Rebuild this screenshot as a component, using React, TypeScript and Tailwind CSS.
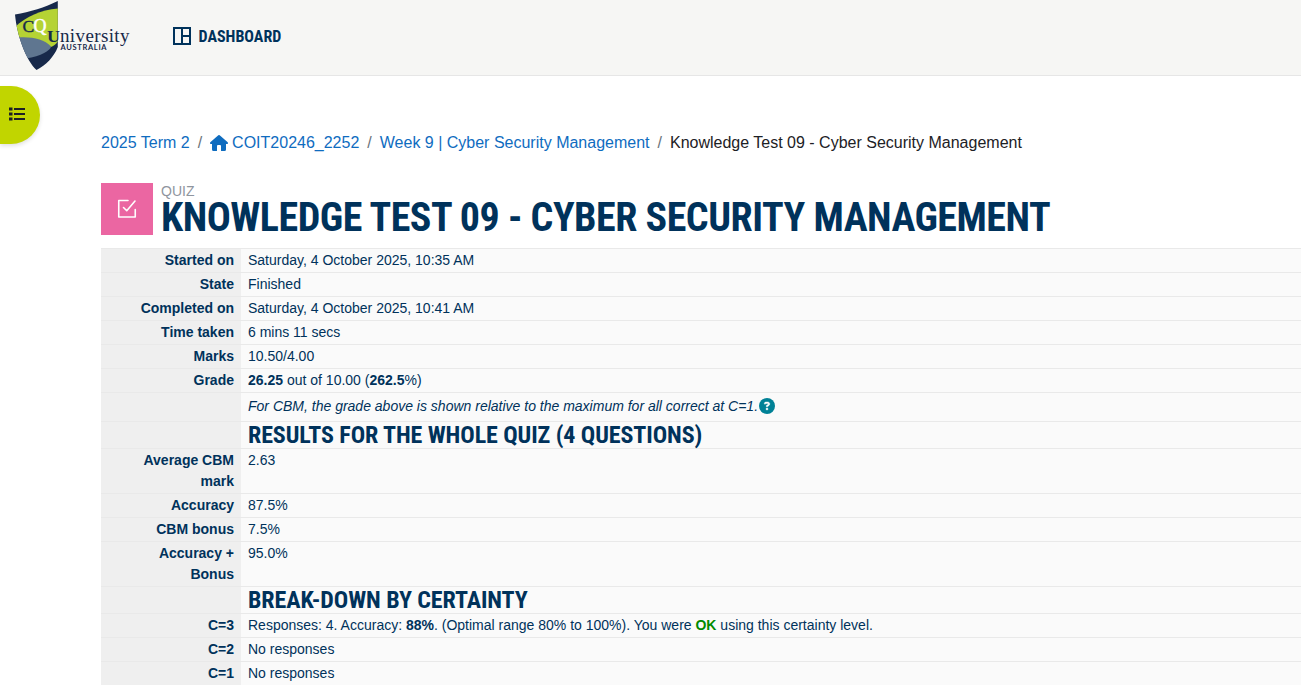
import type { ReactNode } from 'react';

const heading = "font-['Roboto_Condensed',Roboto,sans-serif] [font-stretch:75%] font-bold uppercase text-[#00325b] whitespace-nowrap";

const rows: { label: string; value: ReactNode; h: string; title?: boolean }[] = [
  { label: 'Started on', value: 'Saturday, 4 October 2025, 10:35 AM', h: 'h-[24px]' },
  { label: 'State', value: 'Finished', h: 'h-[24px]' },
  { label: 'Completed on', value: 'Saturday, 4 October 2025, 10:41 AM', h: 'h-[24px]' },
  { label: 'Time taken', value: '6 mins 11 secs', h: 'h-[24px]' },
  { label: 'Marks', value: '10.50/4.00', h: 'h-[24px]' },
  { label: 'Grade', value: <><b>26.25</b> out of 10.00 (<b>262.5</b>%)</>, h: 'h-[24px]' },
  {
    label: '',
    value: (
      <span className="flex items-start pt-[2px]">
        <i>For CBM, the grade above is shown relative to the maximum for all correct at C=1.</i>
        <HelpIcon />
      </span>
    ),
    h: 'h-[29px]',
  },
  { label: '', value: 'Results for the whole quiz (4 questions)', h: 'h-[27px]', title: true },
  { label: 'Average CBM mark', value: '2.63', h: 'h-[45px]' },
  { label: 'Accuracy', value: '87.5%', h: 'h-[24px]' },
  { label: 'CBM bonus', value: '7.5%', h: 'h-[24px]' },
  { label: 'Accuracy + Bonus', value: '95.0%', h: 'h-[45px]' },
  { label: '', value: 'Break-down by certainty', h: 'h-[27px]', title: true },
  {
    label: 'C=3',
    value: <>Responses: 4. Accuracy: <b>88%</b>. (Optimal range 80% to 100%). You were <b className="text-[#008a00]">OK</b> using this certainty level.</>,
    h: 'h-[24px]',
  },
  { label: 'C=2', value: 'No responses', h: 'h-[24px]' },
  { label: 'C=1', value: 'No responses', h: 'h-[24px]' },
];

function HelpIcon() {
  return (
    <svg className="ml-[1px] mt-[2px] h-4 w-4 shrink-0" viewBox="0 0 512 512">
      <path fill="#008196" d="M256 512A256 256 0 1 0 256 0a256 256 0 1 0 0 512z" />
      <path fill="#fff" stroke="#fff" strokeWidth="14" d="M169.800 165.300c7.900-22.300 29.100-37.300 52.800-37.300h58.300c34.900 0 63.100 28.300 63.100 63.100c0 22.600-12.100 43.500-31.700 54.800L280 264.400c-.2 13-10.900 23.600-24 23.600c-13.300 0-24-10.700-24-24V250.500c0-8.600 4.600-16.500 12.100-20.800l44.300-25.400c4.700-2.700 7.600-7.700 7.600-13.100c0-8.400-6.800-15.100-15.100-15.100H222.600c-3.400 0-6.400 2.100-7.500 5.300l-.4 1.200c-4.400 12.500-18.200 19-30.600 14.600s-19-18.200-14.600-30.600l.3-1.300zM224 352a32 32 0 1 1 64 0 32 32 0 1 1-64 0z" />
    </svg>
  );
}

function Logo() {
  return (
    <svg className="h-[75px] w-[117px] shrink-0" viewBox="14 0 117 75">
      <clipPath id="shield">
        <path d="M15 14.500C30 12 45 7.500 57.800 1V47C54 57 46 65 36.500 70C26 60 17 36 15 14.500Z" />
      </clipPath>
      <g clipPath="url(#shield)">
        <path fill="#17294a" d="M14 0H58V71H14z" />
        <path fill="#b5d334" d="M14 28C25 17 40 10 58 8.500V41C56 44.500 54 45.500 51 47L20 38z" />
        <path fill="#5f7690" d="M18 37.500C32 36.500 44 39 51 46.500C51 50 41 56.500 26 58.500C23 53 20 45 18 37.500Z" />
      </g>
      <g fontFamily="'Liberation Serif',serif">
        <text x="22.500" y="31.500" fontSize="17.500" fill="#17294a" stroke="#17294a" strokeWidth=".4">C</text>
        <text x="33.500" y="32" fontSize="18" fill="#fff" stroke="#fff" strokeWidth=".5">Q</text>
        <text x="47" y="41.500" fontSize="17" fontWeight="700" fill="#17294a" textLength="13" lengthAdjust="spacingAndGlyphs">U</text>
        <text x="60" y="41.500" fontSize="19" fill="#17294a" textLength="69.500">niversity</text>
      </g>
      <text x="60.500" y="50" fontFamily="Lato,sans-serif" fontSize="7.500" fontWeight="700" fill="#17294a" textLength="46">AUSTRALIA</text>
    </svg>
  );
}

export default function App() {
  return (
    <div className="h-[692px] overflow-hidden bg-white font-['Liberation_Sans',Arial,sans-serif] text-[14px] text-[#00325b]">
      <header className="flex h-[76px] items-start border-b border-[#e6e6e6] bg-[#f6f6f4] pl-[14px]">
        <Logo />
        <a className="ml-[42px] mt-[27px] flex h-[18px] items-center gap-[7.5px]">
          <svg className="h-[18px] w-[18px]" viewBox="0 0 18 18" fill="none" stroke="#00325b" strokeWidth="2">
            <path d="M1 1H17V17H1zM9 1V17M9 9H17" />
          </svg>
          <span className={`${heading} pt-[2px] text-[16px]`}>Dashboard</span>
        </a>
      </header>
      <button className="mt-[10px] flex h-[58px] w-[40px] items-center rounded-r-[29px] bg-[#c1d500] pb-[2px] pl-[9px] shadow-[0_2px_4px_rgba(0,0,0,0.12)]">
        <svg className="h-[16px] w-[16px]" viewBox="0 0 16 16" fill="#1d2125">
          <path d="M0 1.500h3.500v3H0zM0 6.500h3.500v3H0zM0 11.500h3.500v3H0zM5 2h11v2H5zM5 7h11v2H5zM5 12h11v2H5z" />
        </svg>
      </button>
      <main className="-mt-[13px] pl-[101px]">
        <nav className="flex h-6 items-center whitespace-nowrap text-[16px] text-[#0f6cbf]">
          <a>2025 Term 2</a>
          <span className="px-2 text-[#6a737b]">/</span>
          <svg className="mr-[4px] h-4 w-[18px]" viewBox="0 0 18 16" fill="#0f6cbf">
            <path d="M8.300.3Q9 -.2 9.700.3L17.700 7.300Q18.300 8.100 17.600 9H16V14.500Q16 16 14.500 16H11.500Q11 16 11 15.500V11Q11 10 10 10H8Q7 10 7 11V15.500Q7 16 6.500 16H3.500Q2 16 2 14.500V9H.4Q-.3 8.100.3 7.300Z" />
          </svg>
          <a>COIT20246_2252</a>
          <span className="px-2 text-[#6a737b]">/</span>
          <a>Week 9 | Cyber Security Management</a>
          <span className="px-2 text-[#6a737b]">/</span>
          <span className="text-[#1d2125]">Knowledge Test 09 - Cyber Security Management</span>
        </nav>
        <div className="mt-[28px] flex h-[52px] gap-2">
          <div className="flex h-[52px] w-[52px] items-center justify-center bg-[#eb66a2]">
            <svg className="h-6 w-6" viewBox="0 0 24 24" fill="none" stroke="#fff" strokeWidth="1.600" strokeLinecap="round" strokeLinejoin="round">
              <path d="M13 3.500H3.750V20H20.250V12.500M8.500 10.500L11.750 13.750L20 4" />
            </svg>
          </div>
          <div>
            <div className="h-[16px] text-[14px] leading-[17px] text-[#8f959e]">QUIZ</div>
            <h1 className={`${heading} text-[40px] leading-[38px] tracking-[-0.48px]`}>Knowledge Test 09 - Cyber Security Management</h1>
          </div>
        </div>
        <div className="mt-[13px]">
          {rows.map((r, i) => (
            <div key={i} className={`flex border-t border-[#e9e9e9] leading-[21px] ${r.h}`}>
              <div className="w-[140px] shrink-0 bg-[#efefef] pl-[20px] pr-[7px] pt-px text-right font-bold">{r.label}</div>
              <div className="flex-1 whitespace-nowrap bg-[#fafafa] pl-[7px] pt-px">
                {r.title ? <h3 className={`${heading} text-[24px] leading-[25px] tracking-[-0.09px]`}>{r.value}</h3> : r.value}
              </div>
            </div>
          ))}
        </div>
      </main>
    </div>
  );
}
